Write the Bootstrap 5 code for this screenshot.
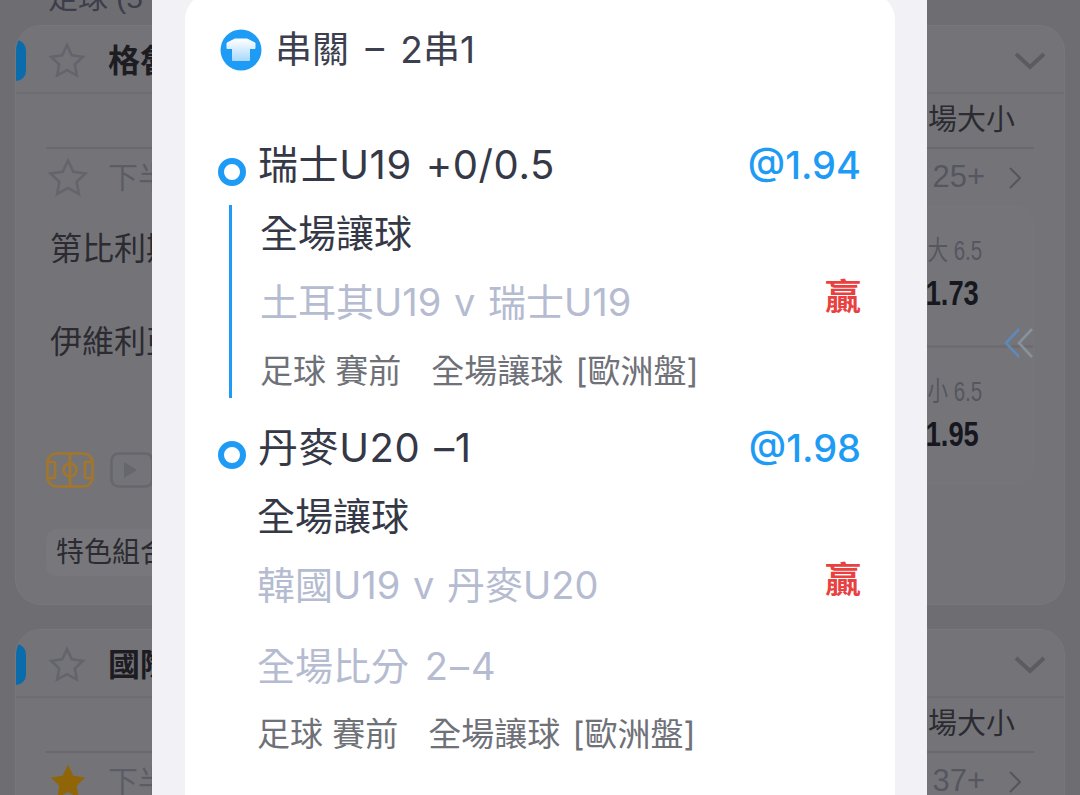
<!DOCTYPE html>
<html lang="zh-Hant">
<head>
<meta charset="utf-8">
<title>串關</title>
<link href="https://cdn.jsdelivr.net/npm/bootstrap@5.3.0/dist/css/bootstrap.min.css" rel="stylesheet">
<style>
html,body{height:795px;overflow:hidden}
body{background:#6e6e72;font-family:"Liberation Sans","Noto Sans CJK TC",sans-serif;color:#26262c;position:relative}
.pagewrap{margin-top:-10px}
.toprow{height:35px;line-height:16px;padding-left:48px;font-size:30px;color:#3c3e4c}
.bgcard{margin:0 15px 24px;height:580px;background:#747478;border-radius:26px;border:1px solid #78787c;overflow:hidden}
.bghead{height:68px;border-bottom:2px solid #6e6e72;padding-right:18px;padding-top:3px}
.pill{width:10px;height:41px;background:#0a6cab;border-radius:0 14px 14px 0;margin-right:21px}
.bgname{font-size:32px;font-weight:700;color:#1c1c22;margin-left:21px}
.bgbody{padding:0 30px}
.mkhead{height:55px;border-bottom:2px solid #69696d;font-size:29px;color:#2b2b31}
.timerow{height:57px;color:#57585f;font-size:30px}
.timerow .tt{margin-left:18px;color:#5b5c66}
.scorenum{font-size:31px;color:#55565f}
.teamcol{width:300px}
.team{font-size:32px;color:#2b2b31;white-space:nowrap}
.team1{height:86px}
.team2{height:100px}
.iconrow{padding-top:60px;height:137px}
.tagpill{display:inline-block;height:47px;line-height:47px;padding:0 10px;font-size:28px;color:#2b2b31;background:#78787c;border-radius:10px;white-space:nowrap}
.oddsbox{width:300px;height:278px;border:1px solid #77777b;border-radius:18px;background:#757579;position:relative}
.oddscell{height:138px;padding-right:33px;text-align:right}
.oddscell+.oddscell{border-top:3px solid #6d6d71}
.oddsinner{display:inline-block;width:100px;text-align:center;padding-top:24px}
.oline{font-size:27px;line-height:40px;color:#55565f;white-space:nowrap;transform:scaleX(.76);transform-origin:70% 50%}
.oval{font-size:35px;line-height:44px;font-weight:700;color:#17171f;transform:scaleX(.78);transform-origin:60% 50%}
.chev{position:absolute;right:-2px;top:120px;z-index:2}
.sheet{position:absolute;left:152px;top:-40px;width:775px;height:900px;background:#f1f1f6;padding:32px 32px 0 33px;font-family:Inter,"Noto Sans CJK TC",sans-serif}
.panel{background:#fff;height:100%;border-radius:28px 28px 0 0;width:710px;padding:0 35px 0 33px}
.ptitle{height:116px;margin-bottom:32px;font-size:37px;color:#3c3f4e;word-spacing:6px}
.ptitle svg{margin-left:2px}
.ptitle .ttxt{margin-left:13px}
.ptop{height:50px}
.dot{width:28px;height:28px;border:6.5px solid #1e9bf5;border-radius:50%;background:#fff;margin-top:18px;flex:none}
.selname{font-size:40px;color:#353846;margin-left:12px;white-space:nowrap;word-spacing:2px;letter-spacing:.6px}
.oddsblue{font-size:38px;color:#1e9bf5;font-weight:500;margin-right:-1px}
.detail{margin-top:15px;margin-left:11px}
.detail.lined{border-left:3px solid #1e9bf5;padding-left:28px}
.detail.plain{padding-left:29px;margin-left:10px}
.r1{height:56px;font-size:38px;color:#353846}
.r2{height:82px;font-size:38px;color:#b5bbd0;word-spacing:2px}
.r3{height:80px;font-size:38px;color:#b5bbd0;word-spacing:5px}
.r3 .nums{letter-spacing:2px}
.r4{height:55px;padding-top:2px;font-size:33px;color:#6f7178;white-space:nowrap}
.win{font-size:36px;font-weight:700;color:#e8413f;margin-top:-10px;margin-right:-1px}
.gapx{margin-left:30px;word-spacing:3px}
.leg2{margin-top:25px}
</style>
</head>
<body>
<div class="pagewrap">
  <div class="toprow">足球 (5</div>
  <div class="bgcard">
    <div class="bghead d-flex align-items-center">
      <div class="pill"></div>
      <svg width="40" height="40" viewBox="0 0 24 24" fill="none" stroke="#64656c" stroke-width="1.6"><path d="M12 2.5l2.9 6.1 6.6.9-4.8 4.6 1.2 6.6-5.9-3.2-5.9 3.2 1.2-6.6L2.5 9.5l6.6-.9z"/></svg>
      <div class="bgname">格魯吉亞</div>
      <svg class="ms-auto" width="32" height="20" viewBox="0 0 32 20" fill="none" stroke="#5b5b60" stroke-width="4"><path d="M2 3l14 13L30 3"/></svg>
    </div>
    <div class="bgbody">
      <div class="mkhead d-flex align-items-center justify-content-end"><span>全場大小</span><span style="width:19px"></span></div>
      <div class="timerow d-flex align-items-center">
        <svg width="44" height="44" viewBox="0 0 24 24" fill="none" stroke="#64656c" stroke-width="1.5"><path d="M12 2.5l2.9 6.1 6.6.9-4.8 4.6 1.2 6.6-5.9-3.2-5.9 3.2 1.2-6.6L2.5 9.5l6.6-.9z"/></svg>
        <span class="tt">下半場</span>
        <span class="scorenum ms-auto">25+</span>
        <svg class="ms-4" width="12" height="24" viewBox="0 0 12 24" fill="none" stroke="#55565c" stroke-width="2"><path d="M1 2l10 10L1 22"/></svg>
        <span style="width:13px"></span>
      </div>
      <div class="d-flex justify-content-between">
        <div class="teamcol">
          <div class="team team1 d-flex align-items-center ps-1">第比利斯</div>
          <div class="team team2 d-flex align-items-center ps-1">伊維利亞</div>
          <div class="iconrow d-flex align-items-start gap-3">
            <svg width="48" height="36" viewBox="0 0 48 36" fill="none" stroke="#a3762a" stroke-width="2.6"><rect x="1.5" y="1.5" width="45" height="33" rx="9"/><path d="M24 2v32"/><circle cx="24" cy="18" r="6.5"/><path d="M2 10h6a1 1 0 0 1 1 1v14a1 1 0 0 1-1 1H2M46 10h-6a1 1 0 0 0-1 1v14a1 1 0 0 0 1 1h6"/></svg>
            <svg width="44" height="36" viewBox="0 0 44 36" fill="none" stroke="#66676c" stroke-width="2.6"><rect x="1.5" y="1.5" width="41" height="33" rx="7"/><path d="M14 10l13 8-13 8z" fill="#66676c" stroke="none"/></svg>
          </div>
          <div class="tagpill">特色組合</div>
        </div>
        <div class="oddsbox">
          <div class="oddscell"><div class="oddsinner"><div class="oline">大 6.5</div><div class="oval">1.73</div></div></div>
          <div class="oddscell"><div class="oddsinner"><div class="oline">小 6.5</div><div class="oval">1.95</div></div></div>
          <svg class="chev" width="32" height="32" viewBox="0 0 32 32" fill="none" stroke-width="2.6"><path d="M16 2L3 16l13 14" stroke="#5d8ab8"/><path d="M29 2L16 16l13 14" stroke="#87919b"/></svg>
        </div>
      </div>
    </div>
  </div>
  <div class="bgcard">
    <div class="bghead d-flex align-items-center">
      <div class="pill"></div>
      <svg width="40" height="40" viewBox="0 0 24 24" fill="none" stroke="#64656c" stroke-width="1.6"><path d="M12 2.5l2.9 6.1 6.6.9-4.8 4.6 1.2 6.6-5.9-3.2-5.9 3.2 1.2-6.6L2.5 9.5l6.6-.9z"/></svg>
      <div class="bgname">國際賽</div>
      <svg class="ms-auto" width="32" height="20" viewBox="0 0 32 20" fill="none" stroke="#5b5b60" stroke-width="4"><path d="M2 3l14 13L30 3"/></svg>
    </div>
    <div class="bgbody">
      <div class="mkhead d-flex align-items-center justify-content-end"><span>全場大小</span><span style="width:19px"></span></div>
      <div class="timerow d-flex align-items-center">
        <svg width="44" height="44" viewBox="0 0 24 24" fill="#8f6508"><path d="M12 2.5l2.9 6.1 6.6.9-4.8 4.6 1.2 6.6-5.9-3.2-5.9 3.2 1.2-6.6L2.5 9.5l6.6-.9z"/></svg>
        <span class="tt">下半場</span>
        <span class="scorenum ms-auto">37+</span>
        <svg class="ms-4" width="12" height="24" viewBox="0 0 12 24" fill="none" stroke="#55565c" stroke-width="2"><path d="M1 2l10 10L1 22"/></svg>
        <span style="width:13px"></span>
      </div>
    </div>
  </div>
</div>

<div class="sheet">
  <div class="panel">
    <div class="ptitle d-flex align-items-center">
      <svg width="42" height="42" viewBox="0 0 42 42"><defs><linearGradient id="shirtg" x1="0" y1="0" x2="0" y2="1"><stop offset="0" stop-color="#ffffff"/><stop offset="1" stop-color="#a9d9fb"/></linearGradient></defs><circle cx="21" cy="21" r="20.5" fill="#1e9bf5"/><path d="M15 10h12l8 4v5.5h-5.5V31.5h-17V19.5H7V14z" fill="url(#shirtg)" stroke="url(#shirtg)" stroke-width="1" stroke-linejoin="round"/></svg>
      <span class="ttxt">串關 – 2串1</span>
    </div>
    <div class="ptop d-flex align-items-center">
      <div class="dot align-self-start"></div>
      <div class="selname">瑞士U19 +0/0.5</div>
      <div class="oddsblue ms-auto">@1.94</div>
    </div>
    <div class="detail lined">
      <div class="r1 d-flex align-items-center">全場讓球</div>
      <div class="r2 d-flex align-items-center justify-content-between"><span>土耳其U19 v 瑞士U19</span><span class="win">贏</span></div>
      <div class="r4 d-flex align-items-center"><span>足球 賽前</span><span class="gapx">全場讓球 [歐洲盤]</span></div>
    </div>
    <div class="ptop leg2 d-flex align-items-center">
      <div class="dot align-self-start"></div>
      <div class="selname">丹麥U20 –1</div>
      <div class="oddsblue ms-auto">@1.98</div>
    </div>
    <div class="detail plain">
      <div class="r1 d-flex align-items-center">全場讓球</div>
      <div class="r2 d-flex align-items-center justify-content-between"><span>韓國U19 v 丹麥U20</span><span class="win">贏</span></div>
      <div class="r3 d-flex align-items-center"><span>全場比分 <span class="nums">2–4</span></span></div>
      <div class="r4 d-flex align-items-center"><span>足球 賽前</span><span class="gapx">全場讓球 [歐洲盤]</span></div>
    </div>
  </div>
</div>
<script src="https://cdn.jsdelivr.net/npm/bootstrap@5.3.0/dist/js/bootstrap.bundle.min.js"></script>
</body>
</html>
